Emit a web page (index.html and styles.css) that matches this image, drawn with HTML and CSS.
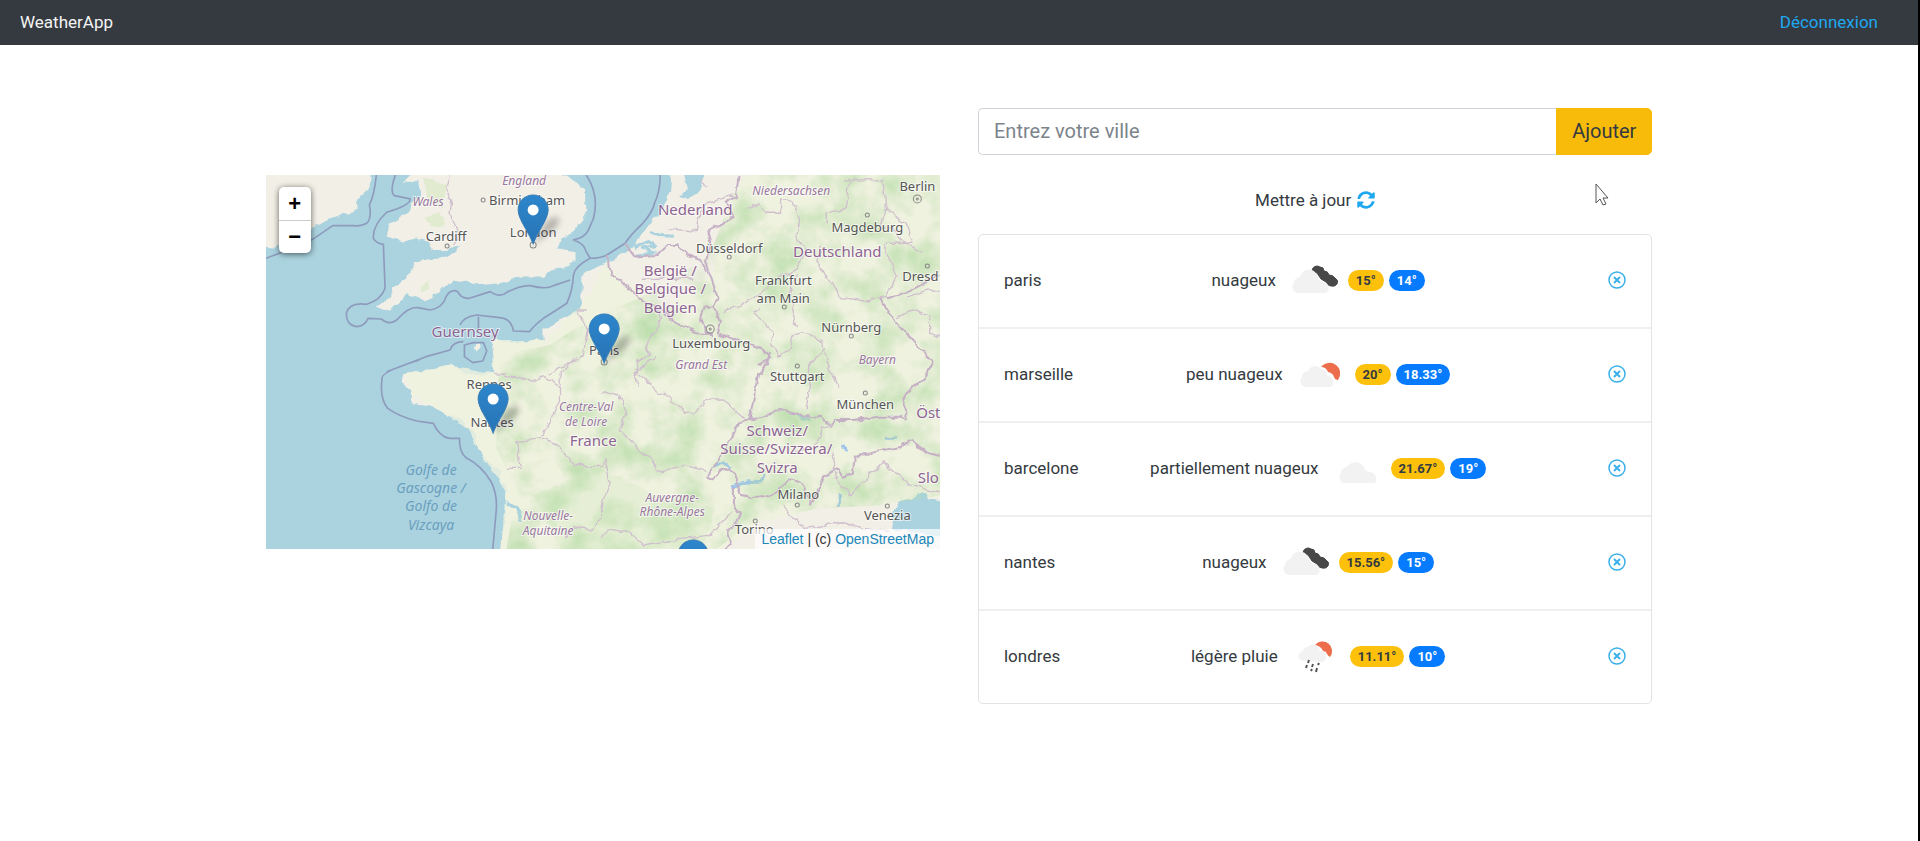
FILE: index.html
```html
<!DOCTYPE html>
<html lang="fr">
<head>
<meta charset="utf-8">
<title>WeatherApp</title>
<link rel="stylesheet" href="styles.css">
</head>
<body>
<svg class="defs" width="0" height="0" aria-hidden="true">
  <symbol id="cloud" viewBox="0 0 62 62"><path d="M21 46a6 6 0 0 1-4-10 6 6 0 0 1 6-6 10 10 0 0 1 17 0q1 4 5 5a7 7 0 0 1 6 11z" fill="#f2f2f2"/></symbol>
  <symbol id="broken" viewBox="0 0 62 62"><path d="M31 22a5 5 0 0 1 8-4q4 0 4 4 4 0 5 4 4 0 6 3 4 2 2 6-2 3-6 2-3 0-5-4l-5-3-4-6z" fill="#484848" stroke="#484848" stroke-linejoin="round"/><path d="M17 44a6 6 0 0 1-4-10 6 6 0 0 1 6-6 9 9 0 0 1 17-2q2 6 6 7a6 6 0 0 1 3 11z" fill="#f2f2f2"/></symbol>
  <symbol id="few" viewBox="0 0 62 62"><path d="M33 24a10 10 0 1 1 17 13q-3 0-4-3-1-4-6-5-2-5-7-5z" fill="#ec6e4c"/><path d="M18 44a6 6 0 0 1-4-10 6 6 0 0 1 6-6q2-5 8-5 3 0 5 3 6 1 6 6 5 1 6 6 1 6-4 6z" fill="#f2f2f2"/></symbol>
  <symbol id="rain" viewBox="0 0 62 62"><path d="M32 20a9 9 0 1 1 15 12q-2-1-3-3-1-3-4-3-2-5-8-6z" fill="#ec6e4c"/><path d="M21 36a5 5 0 0 1-1-10q1-4 5-4 3-4 7-2 4 1 5 6 5 0 6 4 1 6-4 7z" fill="#f2f2f2"/><path d="M26 35l-1 3M24 40l-1 3M30 39l-1 3M29 44l-1 2M36 38l-1 2M34 43l-1 4" stroke="#555" stroke-width="2"/></symbol>
  <symbol id="close" viewBox="0 0 18 18"><circle cx="9" cy="9" r="8" fill="none" stroke="#3bb0ea" stroke-width="1.5"/><path d="M6 6l6 6M12 6l-6 6" stroke="#3bb0ea" stroke-width="2"/></symbol>
  <symbol id="pin" viewBox="0 0 34 52" overflow="visible"><path d="M16 51L26 32q8-10 14-9 5 3-3 12z" fill="#000" opacity=".25" filter="url(#soft)"/><path d="M16 1C7.500 1 1 8 1 16c0 10 9 18 15 34 6-16 15-24 15-34C31 8 24.500 1 16 1z" fill="url(#pinfill)" stroke="#3a7fb5" stroke-width="1"/><circle cx="16" cy="16" r="5.500" fill="#fff"/></symbol>
  <defs>
    <linearGradient id="pinfill" x2="0" y2="1"><stop stop-color="#2e86cc"/><stop offset="1" stop-color="#2674b5"/></linearGradient>
    <filter id="soft" x="-50%" y="-50%" width="200%" height="200%"><feGaussianBlur stdDeviation="3"/></filter>
    <filter id="rough" x="0" y="0" width="100%" height="100%"><feTurbulence type="fractalNoise" baseFrequency=".1" numOctaves="2" seed="4"/><feDisplacementMap in="SourceGraphic" scale="7" xChannelSelector="R" yChannelSelector="G"/></filter>
    <filter id="woods" x="0" y="0" width="100%" height="100%" color-interpolation-filters="sRGB"><feTurbulence type="fractalNoise" baseFrequency=".01" numOctaves="4" seed="11"/><feColorMatrix values="0 0 0 0 .71  0 0 0 0 .86  0 0 0 0 .65  1.600 0 0 0 -.600"/><feComposite in2="SourceGraphic" operator="in"/></filter>
  </defs>
</svg>

<header class="navbar">
  <a class="brand" href="#">WeatherApp</a>
  <a class="logout" href="#">Déconnexion</a>
</header>

<main class="container">
  <section class="map" aria-label="Carte">
    <svg class="tiles" viewBox="0 0 674 374" preserveAspectRatio="xMidYMid slice">
      <rect width="674" height="374" fill="#aad3df"/>
      <g filter="url(#rough)">
        <g transform="scale(.33333)">
          <g fill="#f2efe6">
            <path d="M-20-20H312L307 45 272 72 275 105 225 118 185 135 145 150 100 195 30 215-20 212z"/>
            <path d="M410 20L465-20H850L925 15 957 50V135L912 170 885 195 872 220 928 228V260L882 280 832 305 762 305 702 325 642 330 592 315 532 335 482 380 422 355 372 410 327 395 362 375 382 340 422 305 447 260 482 255 542 248 590 212 542 225 497 225 482 200 452 190 412 200 362 185 372 170 367 150 422 115 432 85 462 65 460 22z"/>
            <path d="M1217-20L1212 45 1192 95 1152 145 1122 175 1107 210 1077 235 1022 265 982 280 952 295 947 385 932 415 882 435 832 465 832 495 772 500 732 505 677 490 682 545 685 595 642 600 602 600 572 575 542 570 502 580 412 595 407 625 437 645 437 685 492 695 542 720 592 735 602 760 627 770 632 820 672 865 707 885 697 910 717 930 717 965 752 1005 722 990 710 1075 704 1150H2050V-20z"/>
            <path d="M622 512l20-5 8 12-16 10z"/>
          </g>
          <path d="M947 390L1022 265 1080 330 1200 400 1335 300 1400 60 1450-20H2050V960L1870 990 1650 1000 1450 1050 1350 1150H704L717 965 697 910 632 820 602 760 440 660 412 595 540 572 685 595 680 495 832 495z" fill="#eff2df" opacity=".8"/>
          <path d="M1250-10h65l-15 60-35 25-25-10 25-25z" fill="#aad3df"/>
          <path d="M1105 215l45-18 15 15-40 8 42 12-58 12M1155 170l25 12 40 2" fill="none" stroke="#aad3df" stroke-width="9"/>
          <path d="M1882 1060L1872 1030 1902 980 1942 965 1975 950 1990 970 2050 980V1090L1960 1075z" fill="#aad3df"/>
          <path d="M722 980Q760 1000 765 1035" fill="none" stroke="#aad3df" stroke-width="10"/>
          <path d="M1345 875q25-18 48 0M1395 935l35-10 45-4 20-25M1725 815l20 8M1722 960v35M1850 790h45M1590 720l40 15" fill="none" stroke="#9dc3ec" stroke-width="9"/>
          <path d="M800 960L1000 880 1200 970 1350 1000 1300 1150H900z" fill="#cfe8bd" opacity=".3"/>
          <path d="M475 10l70 20-20 70-40-20zM480 130l40-20 15 40-40 10zM465 330l20-10 5 25-20 5z" fill="#d3e8c0" opacity=".6"/>
        </g>
      </g>
      <g transform="scale(.33333)"><path d="M960 440L1160 350 1330 240 1400 60 1450 0H2022V960L1870 990 1650 1000 1450 1050 1350 1122H720L740 1010 760 960 690 820 700 540 850 510z" filter="url(#woods)"/></g>
      <path transform="scale(.33333)" fill="none" stroke="#8f9bbd" stroke-width="5" stroke-linejoin="round" d="M331 0Q325 60 310 90 318 130 302 145 285 155 262 152H200L142 192 80 220 0 250M388 0Q370 50 385 62L432 72Q435 90 362 112 320 150 322 190 330 205 352 208L357 340Q345 375 302 388 250 380 241 415 240 450 270 455 295 455 306 430L345 432Q372 455 397 430 430 394 455 398L492 405Q530 400 540 365 555 340 575 350 585 372 610 370L672 350Q702 370 722 352 765 330 792 332 842 345 862 332L912 315M960 0Q1000 60 982 130L967 165Q955 190 922 195 955 205 960 230L972 250Q1002 250 1022 240L1077 205Q1092 180 1130 145 1160 110 1165 85 1182 50 1182 0M972 250Q925 275 922 300 920 345 902 385 880 400 832 430 805 450 790 470L742 468Q735 430 700 428L632 420Q592 425 582 450M637 425V465M592 500Q560 500 552 525L480 545 362 590M460 555Q345 590 348 610 340 670 365 700 400 725 452 738L502 745Q520 785 550 790L580 790Q580 835 600 848 645 870 675 920 695 960 690 1010L680 1122M595 510l0 35 25 18 30-5 12-30-10-25-30 0z"/>
      <g filter="url(#rough)">
        <g transform="scale(.33333)" fill="none" stroke="#c5b0c5" stroke-width="6" stroke-linejoin="round">
          <path d="M1417 0L1410 60 1382 80 1402 130 1325 165 1335 200 1320 270 1335 310 1355 370M1022 240L1032 300 1065 315 1090 345 1132 380 1175 400 1225 440 1290 475 1340 478M1075 205l30 40 70-5 30-30h30l30 30 40 15 15 35M1355 370l-15 20-25 5-10 40 20 40M1340 395l25 45-10 35 75 25 55 20 30 30-40 20"/>
          <path d="M1512 535Q1500 580 1475 600L1450 735 1512 720 1540 702 1572 712 1630 725 1665 730 1692 755 1702 735 1760 735 1840 725 1905 725 1922 735 1918 705 1905 670 1980 600 2000 560 1970 530 1880 430 1865 405 1840 370M1865 370l40-10 60-30 57-30M1450 735l-35 10-20 50-40 60-30 50 20 5 20-20 20-10 20 10 10 40 10 30 60 10 40-15 50-45 30 10 30 70 35-80 45-30 15 25 30-10 5-50 40-10 100-20 30-20 50 40 130 25M1400 935l0 50 20 30-10 30-25 20 10 40-20 20"/>
          <g stroke="#d0c0cd" stroke-width="4">
            <path d="M552 0l-10 45 15 30-5 45 15 30 10 40-15 20M962 405l-30 0 20 35 10 30-10 70-15 20-60 15-30 20M1170 400l10 30-10 40-30 30 10 40-35 20-10 60M1105 580l70 75h20l60 60 30 0 40-40 50 0 60 55M685 595l60 10 50 10 40-10 45 30 0 40-20 50-25 40-5 20M885 630l0-40 50-40M832 790l-80 10 10 80-40 0M832 790l40 20 50 60 85 5 10-20 15 70-20 50-10 50-20 40-60-10-25 30M1005 650l55 10 20 60-15 50 65 60 55 60 70-20 70 20M1170 545l-70 50 20 40M1000 1090l30-30 60 10 40 40 60-10 60-10 80-10 30-30 40-40"/>
            <path d="M1450 100l30-15 20 30 40 0 0-40 40 0 20 60-10 50 30 40-30 60-50 20-70 60-60 30-40 15M1730 15h120l10 90-20 50 40 10 50 50 40 20M1860 105l60 40 20 60-85 0M1850 205l40 100-30 60-60 10-80-10-20-40-45-50 10-60M1750 20l-10 80-60 10 0 35M1480 400l-20 10 60 60-10 40 30 30 30-20 10-40 40-10 45 30 25 80 30 60M1680 520l-50 50 0 60-10 75M1590 300l-20 60 20 100M1925 365l60-20 37 0M1890 425l60-20 40 20 0 50 30 10M1580 830l60-10 30-60 30-10M1700 830l10 80 40 50 100-100 80 70 90 20M1550 990l30 40 40 30 110-20 60 20 80 10M1300 10l20 30M1200 160l90 10 20-80 90-30M1130 310l150 0"/>
          </g>
        </g>
      </g>
      <g fill="none" stroke="#888" stroke-width="1">
        <circle cx="217" cy="25" r="2"/><circle cx="181" cy="71" r="2"/><circle cx="267" cy="70" r="3"/><circle cx="338" cy="187" r="3"/><circle cx="463" cy="82" r="2"/><circle cx="601" cy="40" r="2"/><circle cx="651" cy="24" r="4"/><circle cx="651" cy="24" r="1"/><circle cx="661" cy="91" r="2"/><circle cx="518" cy="132" r="2"/><circle cx="585" cy="161" r="2"/><circle cx="444" cy="154" r="4"/><circle cx="444" cy="154" r="1"/><circle cx="531" cy="191" r="2"/><circle cx="599" cy="218" r="2"/><circle cx="531" cy="330" r="2"/><circle cx="621" cy="331" r="2"/><circle cx="489" cy="346" r="2"/>
      </g>
      <g class="city">
        <text x="261" y="30">Birmingham</text><text x="180" y="66">Cardiff</text><text x="267" y="62">London</text><text x="338" y="180">Paris</text><text x="223" y="214">Rennes</text><text x="226" y="252">Nantes</text><text x="651" y="16">Berlin</text><text x="601" y="57">Magdeburg</text><text x="463" y="78">Düsseldorf</text><text x="517" y="110">Frankfurt</text><text x="517" y="128">am Main</text><text x="654" y="106">Dresd</text><text x="585" y="157">Nürnberg</text><text x="445" y="173">Luxembourg</text><text x="531" y="206">Stuttgart</text><text x="599" y="234">München</text><text x="532" y="324">Milano</text><text x="621" y="345">Venezia</text><text x="488" y="359">Torino</text>
      </g>
      <g class="country">
        <text x="199" y="162">Guernsey</text><text x="429" y="40">Nederland</text><text x="571" y="82">Deutschland</text><text x="404" y="101">België /</text><text x="404" y="119">Belgique /</text><text x="404" y="138">Belgien</text><text x="327" y="271">France</text><text x="511" y="261">Schweiz/</text><text x="510" y="279">Suisse/Svizzera/</text><text x="511" y="298">Svizra</text><text x="662" y="243">Öst</text><text x="662" y="308">Slo</text>
      </g>
      <g class="region">
        <text x="258" y="10">England</text><text x="162" y="31">Wales</text><text x="525" y="20">Niedersachsen</text><text x="611" y="189">Bayern</text><text x="435" y="194">Grand Est</text><text x="320" y="236">Centre-Val</text><text x="320" y="251">de Loire</text><text x="282" y="345">Nouvelle-</text><text x="282" y="360">Aquitaine</text><text x="406" y="327">Auvergne-</text><text x="406" y="341">Rhône-Alpes</text>
      </g>
      <g class="sea">
        <text x="165" y="300">Golfe de</text><text x="165" y="318">Gascogne /</text><text x="165" y="336">Golfo de</text><text x="165" y="355">Vizcaya</text>
      </g>
      <use href="#pin" x="251" y="19" width="34" height="52"/>
      <use href="#pin" x="322" y="138" width="34" height="52"/>
      <use href="#pin" x="211" y="208" width="34" height="52"/>
      <use href="#pin" x="411" y="364" width="34" height="52"/>
    </svg>
    <div class="zoom">
      <button type="button" aria-label="Zoom avant">+</button>
      <button type="button" aria-label="Zoom arrière">−</button>
    </div>
    <div class="attribution"><a href="#">Leaflet</a> | (c) <a href="#">OpenStreetMap</a></div>
  </section>

  <section class="panel">
    <form class="search">
      <input type="text" placeholder="Entrez votre ville" aria-label="Entrez votre ville">
      <button type="button">Ajouter</button>
    </form>
    <p class="refresh">Mettre à jour
      <a href="#" aria-label="Actualiser"><svg viewBox="0 0 512 512"><path fill="currentColor" d="M370.720 133.280C339.458 104.008 298.888 87.962 255.848 88c-77.458.068-144.328 53.178-162.791 126.850-1.344 5.363-6.122 9.150-11.651 9.150H24.103c-7.498 0-13.194-6.807-11.807-14.176C33.933 94.924 134.813 8 256 8c66.448 0 126.791 26.136 171.315 68.685L463.030 40.970C478.149 25.851 504 36.559 504 57.941V192c0 13.255-10.745 24-24 24H345.941c-21.382 0-32.090-25.851-16.971-40.971l41.750-41.749zM32 296h134.059c21.382 0 32.090 25.851 16.971 40.971l-41.750 41.750c31.262 29.273 71.835 45.319 114.876 45.280 77.418-.070 144.315-53.144 162.787-126.849 1.344-5.363 6.122-9.150 11.651-9.150h57.304c7.498 0 13.194 6.807 11.807 14.176C478.067 417.076 377.187 504 256 504c-66.448 0-126.791-26.136-171.315-68.685L48.970 471.030C33.851 486.149 8 475.441 8 454.059V320c0-13.255 10.745-24 24-24z"/></svg></a>
    </p>
    <ul class="cities">
      <li><span>paris</span><div class="weather">nuageux<svg><use href="#broken"/></svg><b class="badge max">15°</b><b class="badge min">14°</b></div><a class="remove" href="#" aria-label="Supprimer paris"><svg><use href="#close"/></svg></a></li>
      <li><span>marseille</span><div class="weather">peu nuageux<svg><use href="#few"/></svg><b class="badge max">20°</b><b class="badge min">18.33°</b></div><a class="remove" href="#" aria-label="Supprimer marseille"><svg><use href="#close"/></svg></a></li>
      <li><span>barcelone</span><div class="weather">partiellement nuageux<svg><use href="#cloud"/></svg><b class="badge max">21.67°</b><b class="badge min">19°</b></div><a class="remove" href="#" aria-label="Supprimer barcelone"><svg><use href="#close"/></svg></a></li>
      <li><span>nantes</span><div class="weather">nuageux<svg><use href="#broken"/></svg><b class="badge max">15.56°</b><b class="badge min">15°</b></div><a class="remove" href="#" aria-label="Supprimer nantes"><svg><use href="#close"/></svg></a></li>
      <li><span>londres</span><div class="weather">légère pluie<svg><use href="#rain"/></svg><b class="badge max">11.11°</b><b class="badge min">10°</b></div><a class="remove" href="#" aria-label="Supprimer londres"><svg><use href="#close"/></svg></a></li>
    </ul>
  </section>
</main>
<svg class="pointer" viewBox="0 0 16 24" aria-hidden="true"><path d="M2 1v19l4-4 3 6 3-1-3-6h5z" fill="#fff" stroke="#555" stroke-width="1"/></svg>
</body>
</html>
```
FILE: styles.css
```css
* { box-sizing: border-box; }
body {
  margin: 0;
  min-height: 100vh;
  border-right: 2px solid #000;
  background: #fff;
  color: #343a40;
  font: 17px/26px Roboto, sans-serif;
}
a { color: #1fa8f0; text-decoration: none; }
.defs { position: absolute; }
.navbar {
  display: flex;
  justify-content: space-between;
  align-items: center;
  height: 45px;
  padding: 0 40px 2px 20px;
  background: #343a40;
}
.navbar .brand { color: #f4f4f4; }
.container {
  display: grid;
  grid-template-columns: 1fr 1fr;
  gap: 38px;
  align-items: start;
  width: 72.300%;
  margin: 63px auto 0;
}
.map {
  position: relative;
  height: 374px;
  margin-top: 67px;
  overflow: hidden;
}
.tiles { display: block; width: 100%; height: 100%; }
.tiles text {
  font-family: "Noto Sans", sans-serif;
  text-anchor: middle;
  paint-order: stroke;
  stroke: #fff9;
  stroke-width: 2px;
}
.city { font-size: 13px; fill: #555; }
.country { font-size: 15px; fill: #8d6391; }
.region { font-size: 12px; font-style: italic; fill: #9a779e; }
.sea { font-size: 14px; font-style: italic; fill: #6c9fc0; }
.tiles .sea text { stroke: none; }
.zoom {
  position: absolute;
  top: 12px;
  left: 13px;
  display: flex;
  flex-direction: column;
  width: 32px;
  border-radius: 5px;
  background: #fff;
  box-shadow: 0 1px 6px #0009;
}
.zoom button {
  height: 33px;
  padding: 0;
  border: 0;
  background: none;
  color: #000;
  font: bold 22px/32px "Liberation Sans", sans-serif;
}
.zoom button + button { border-top: 1px solid #ccc; }
.attribution {
  position: absolute;
  right: 0;
  bottom: 0;
  padding: 0 6px;
  background: #ffffffb3;
  color: #333;
  font: 14px/20px "Liberation Sans", sans-serif;
}
.attribution a { color: #2087b8; }
.search { display: flex; height: 47px; }
.search input, .search button { font: 20px/30px Roboto, sans-serif; }
.search input {
  flex: 1;
  min-width: 0;
  padding: 0 15px 2px;
  border: 1px solid #ced4da;
  border-right: 0;
  border-radius: 5px 0 0 5px;
}
.search input::placeholder { color: #7c848b; opacity: 1; }
.search button {
  padding: 0 15px 2px;
  border: 1px solid #f8bb0a;
  border-radius: 0 5px 5px 0;
  background: #f8bb0a;
  color: #343a40;
}
.refresh {
  display: flex;
  justify-content: center;
  align-items: center;
  gap: 6px;
  margin: 32px 0 21px;
}
.refresh svg { display: block; width: 18px; height: 18px; }
.cities {
  margin: 0;
  padding: 0;
  list-style: none;
  border: 1px solid #e2e3e4;
  border-radius: 5px;
}
.cities li {
  display: grid;
  grid-template-columns: 1fr auto 1fr;
  align-items: center;
  padding: 14px 25px 16px;
}
.cities li + li { border-top: 2px solid #eeeff0; }
.weather { display: flex; align-items: center; padding-left: 6px; }
.weather svg { width: 62px; height: 62px; margin: 0 5px; }
.badge {
  padding: 4px 8px;
  border-radius: 11px;
  font-size: 13px;
  line-height: 13px;
}
.badge + .badge { margin-left: 5px; }
.max { background: #fdc10c; color: #343a40; }
.min { background: #067bfd; color: #fff; }
.remove { justify-self: end; }
.remove svg { display: block; width: 18px; height: 18px; }
.pointer {
  position: absolute;
  top: 183px;
  left: 83%;
  width: 16px;
  height: 24px;
}
```
